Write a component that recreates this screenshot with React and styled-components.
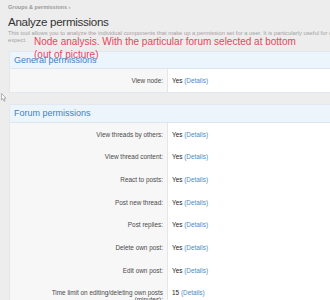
import React from "react";
import styled, { createGlobalStyle } from "styled-components";

const Global = createGlobalStyle`
  html, body { margin: 0; padding: 0; }
  body {
    background: #ededed;
    font-family: "Liberation Sans", Arial, sans-serif;
    width: 330px;
    height: 300px;
    overflow: hidden;
  }
`;

const Page = styled.div`
  position: relative;
  width: 330px;
  height: 300px;
  overflow: hidden;
  background: #ededed;
`;

const Header = styled.div`
  padding: 4px 0 0 8px;
  height: 47px;
  box-sizing: border-box;
`;

const Crumb = styled.div`
  font-size: 5.5px;
  line-height: 6px;
  font-weight: bold;
  color: #999;
`;

const Title = styled.h1`
  margin: 4px 0 0;
  font-size: 11.6px;
  line-height: 15px;
  letter-spacing: -0.3px;
  font-weight: normal;
  color: #333;
`;

const Desc = styled.div`
  margin-top: 0.5px;
  font-size: 5.8px;
  line-height: 7px;
  color: #a3a3a3;
  white-space: nowrap;
`;

const Panels = styled.div`
  display: flex;
  flex-direction: column;
  gap: 11px;
  padding: 4px 0 0 9px;
`;

const Panel = styled.section`
  width: 340px;
  background: #fff;
  border: 1px solid #e3e8ee;
  border-right: none;
`;

const PanelHead = styled.h2`
  margin: 0;
  height: ${(p) => p.$h}px;
  box-sizing: border-box;
  padding-left: 4px;
  display: flex;
  align-items: center;
  font-size: 9px;
  font-weight: normal;
  color: #3d82c2;
  background: #edf5fc;
  border-bottom: 1px solid #dae7f3;
`;

const Row = styled.div`
  display: grid;
  grid-template-columns: 158px 1fr;
`;

const Label = styled.div`
  background: #f7f7f7;
  border-right: 1px solid #e6e6e6;
  padding: 7.85px 4px 7.85px 0;
  text-align: right;
  font-size: 6.4px;
  line-height: 7px;
  color: #4a4a4a;
`;

const Value = styled.div`
  padding: 7.85px 0 7.85px 4px;
  font-size: 6.4px;
  line-height: 7px;
  color: #222;
`;

const Details = styled.span`
  color: #4d8bc4;
`;

const Note = styled.div`
  position: absolute;
  left: 34px;
  top: 35px;
  font-family: "Liberation Sans", Arial, sans-serif;
  font-size: 10px;
  line-height: 13px;
  color: #e6465c;
  white-space: nowrap;
`;

const Cursor = styled.svg`
  position: absolute;
  left: 1px;
  top: 93px;
`;

const forumRows = [
  ["View threads by others:", "Yes"],
  ["View thread content:", "Yes"],
  ["React to posts:", "Yes"],
  ["Post new thread:", "Yes"],
  ["Post replies:", "Yes"],
  ["Delete own post:", "Yes"],
  ["Edit own post:", "Yes"],
  ["Time limit on editing/deleting own posts\n(minutes):", "15"],
];

function PermRow({ label, value }) {
  const lines = label.split("\n");
  return (
    <Row>
      <Label>
        {lines.map((l, i) => (
          <div key={i}>{l}</div>
        ))}
      </Label>
      <Value>
        {value} <Details>(Details)</Details>
      </Value>
    </Row>
  );
}

export default function App() {
  return (
    <Page>
      <Global />
      <Header>
        <Crumb>Groups &amp; permissions ›</Crumb>
        <Title>Analyze permissions</Title>
        <Desc>
          <div>
            This tool allows you to analyze the individual components that make up a permission set for a user. It is particularly useful for determining why a user has (or doesn't have) a permission that you do not
          </div>
          <div>expect.</div>
        </Desc>
      </Header>
      <Panels>
        <Panel>
          <PanelHead $h={17}>General permissions</PanelHead>
          <PermRow label="View node:" value="Yes" />
        </Panel>
        <Panel>
          <PanelHead $h={18}>Forum permissions</PanelHead>
          {forumRows.map(([l, v]) => (
            <PermRow key={l} label={l} value={v} />
          ))}
        </Panel>
      </Panels>
      <Note>
        <div>Node analysis. With the particular forum selected at bottom</div>
        <div>(out of picture)</div>
      </Note>
      <Cursor width="6" height="9" viewBox="0 0 6 9">
        <path d="M0.5 0.5 L0.5 7 L2 5.6 L3.2 8.3 L4.2 7.9 L3 5.2 L5 5.2 Z" fill="#fff" stroke="#888" strokeWidth="0.6" />
      </Cursor>
    </Page>
  );
}
